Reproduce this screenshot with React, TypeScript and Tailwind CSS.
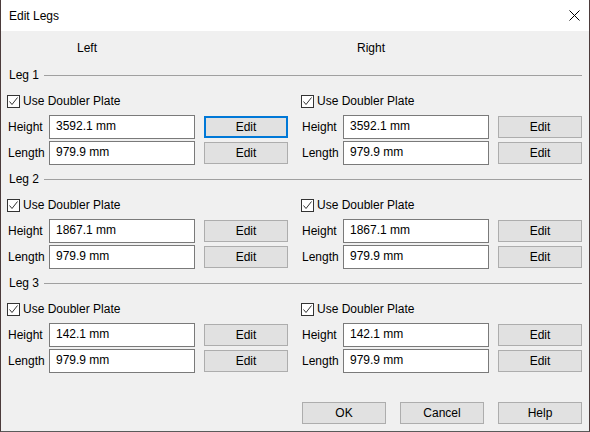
import React from 'react';

const font = { fontFamily: '"Liberation Sans", Arial, sans-serif' };

const Check: React.FC = () => (
  <span className="flex h-[13px] w-[13px] items-center justify-center border border-[#333333] bg-white">
    <svg width="11" height="11" viewBox="0 0 11 11">
      <path d="M1.5 5.5 L4 8.5 L9.5 1.5" fill="none" stroke="#333333" strokeWidth="1" />
    </svg>
  </span>
);

const Btn: React.FC<{ label: string; focused?: boolean; className?: string }> = ({ label, focused, className }) => (
  <button
    className={
      'flex h-[22px] w-[84px] items-center justify-center bg-[#e1e1e1] text-black ' +
      (focused ? 'border-2 border-[#0078d7] ' : 'border border-[#adadad] ') +
      (className ?? '')
    }
  >
    {label}
  </button>
);

const Field: React.FC<{ label: string; value: string; focused?: boolean }> = ({ label, value, focused }) => (
  <div className="flex h-[24px] items-center">
    <span className="w-[42px] pl-[1px]">{label}</span>
    <div className="h-[24px] w-[146px] border border-[#7a7a7a] bg-white pl-[6px] pt-[3px] leading-[15px]">{value}</div>
    <Btn label="Edit" focused={focused} className="ml-[9px]" />
  </div>
);

const Side: React.FC<{ height: string; focused?: boolean }> = ({ height, focused }) => (
  <div className="flex w-[281px] flex-col">
    <div className="mt-[6px] flex h-[20px] items-center gap-[3px]">
      <Check />
      <span>Use Doubler Plate</span>
    </div>
    <div className="mt-[4px] flex flex-col gap-[2px]">
      <Field label="Height" value={height} focused={focused} />
      <Field label="Length" value="979.9 mm" />
    </div>
  </div>
);

const legs = [
  { name: 'Leg 1', left: '3592.1 mm', right: '3592.1 mm' },
  { name: 'Leg 2', left: '1867.1 mm', right: '1867.1 mm' },
  { name: 'Leg 3', left: '142.1 mm', right: '142.1 mm' },
];

export default function App() {
  return (
    <div style={font} className="flex h-[432px] w-[590px] flex-col border-x border-b border-x-[#4b3b3b] border-b-[#5a5a5a] text-[12px] text-black">
      <div className="flex h-[31px] items-center justify-between bg-white pl-[8px] pr-[9px]">
        <span>Edit Legs</span>
        <svg width="11" height="11" viewBox="0 0 11 11" className="mt-[-1px]">
          <path d="M0.5 0.5 L10.5 10.5 M10.5 0.5 L0.5 10.5" stroke="#000" strokeWidth="1" />
        </svg>
      </div>
      <div className="flex flex-1 flex-col bg-[#f0f0f0] pl-[6px] pr-[7px] pb-[7px]">
        <div className="flex h-[34px] items-center gap-[13px]">
          <span className="w-[281px] pl-[70px]">Left</span>
          <span className="w-[281px] pl-[56px]">Right</span>
        </div>
        {legs.map((leg, i) => (
          <div key={leg.name} className={i > 0 ? 'mt-[4px]' : ''}>
            <div className="flex h-[20px] items-center">
              <span className="pl-[2px]">{leg.name}</span>
              <div className="ml-[5px] h-px flex-1 bg-[#a0a0a0]" />
            </div>
            <div className="flex gap-[13px]">
              <Side height={leg.left} focused={i === 0} />
              <Side height={leg.right} />
            </div>
          </div>
        ))}
        <div className="mt-auto flex justify-end gap-[14px]">
          <Btn label="OK" />
          <Btn label="Cancel" />
          <Btn label="Help" />
        </div>
      </div>
    </div>
  );
}
